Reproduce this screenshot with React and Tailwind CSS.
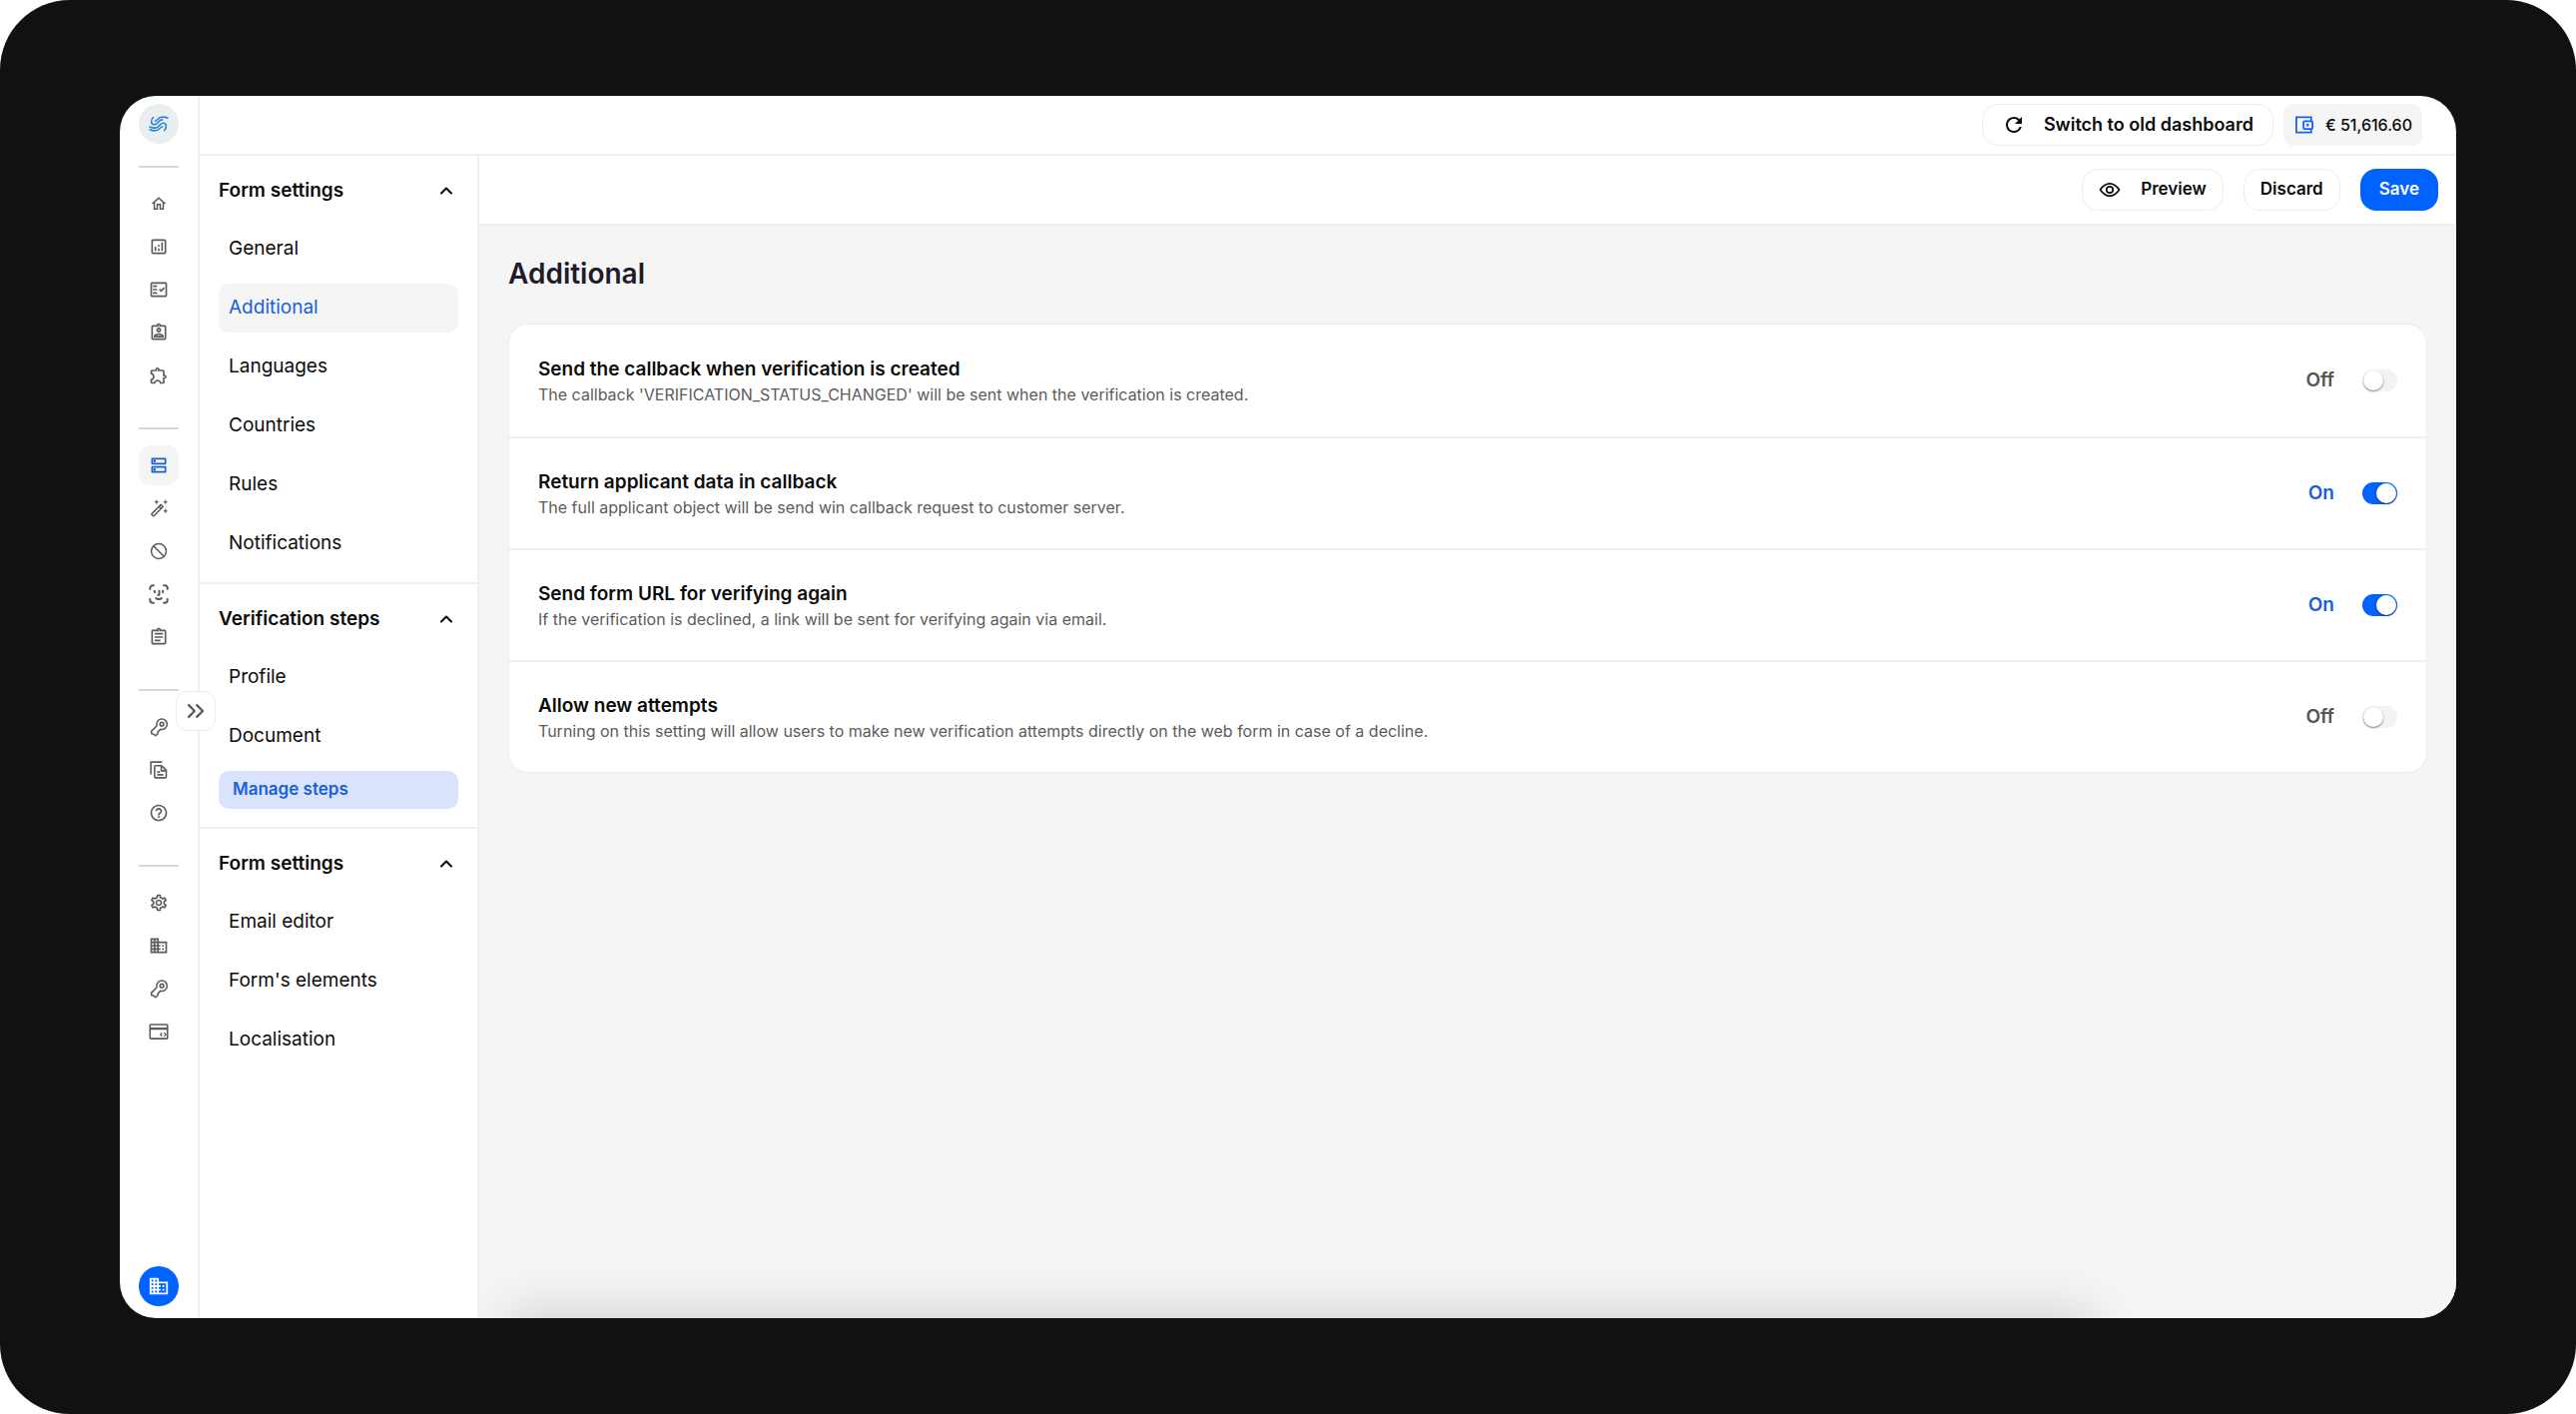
import { useState } from 'react'
import {
  MdOutlineHome, MdOutlineAnalytics, MdOutlineFactCheck, MdOutlineAssignmentInd, MdOutlineExtension,
  MdOutlineDns, MdOutlineAssignment, MdHelpOutline, MdDomain, MdRefresh, MdOutlineSettings,
} from 'react-icons/md'
import { ChevronUp, ChevronsRight, Ban } from 'lucide-react'

function LogoIcon({ className }) {
  return (
    <svg viewBox="0 0 20 16" className={className} fill="none" stroke="#2f86d6" strokeWidth="1.6" strokeLinecap="round" aria-hidden="true">
      <path d="M4.500 1.500C1.500 4.200 2 8.600 5.500 8.800C9.500 9 9 4 13.500 3.900" />
      <path d="M6.300 5.200C8.800 5 8.800 1.200 14 1.100C16 1.100 17.500 1.400 19 2.200" />
      <path d="M15.500 14.500C18.500 11.800 18 7.400 14.500 7.200C10.500 7 11 12 6.500 12.100" />
      <path d="M13.700 10.800C11.200 11 11.200 14.800 6 14.900C4 14.900 2.500 14.600 1 13.800" />
      <path d="M.9 11C2.500 11.900 4.500 12.200 6.500 12.100" />
    </svg>
  )
}

function WandIcon({ className }) {
  return (
    <svg viewBox="0 0 24 24" className={className} fill="none" stroke="currentColor" strokeWidth="2" strokeLinejoin="round" aria-hidden="true">
      <path d="M2.800 19.200 14.800 7.200 17.600 10 5.600 22a1 1 0 0 1-1.400 0l-1.400-1.400a1 1 0 0 1 0-1.400Z" />
      <path d="m12.300 9.700 2.800 2.800" />
      <path d="m9 0 1 2.500 2.500 1-2.500 1L9 7 8 4.500l-2.500-1 2.500-1ZM21 0l1 2.500 2 1-2 1L21 7l-1-2.500-2.500-1 2.500-1ZM21 12l1 2.500 2 1-2 1-1 2.500-1-2.500-2.500-1 2.500-1Z" fill="currentColor" stroke="none" />
    </svg>
  )
}

function FaceIcon({ className }) {
  return (
    <svg viewBox="0 0 24 24" className={className} fill="none" stroke="currentColor" strokeWidth="2.2" strokeLinecap="round" aria-hidden="true">
      <path d="M2.500 6.500v-1a3 3 0 0 1 3-3h1M17.500 2.500h1a3 3 0 0 1 3 3v1M21.500 17.500v1a3 3 0 0 1-3 3h-1M6.500 21.500h-1a3 3 0 0 1-3-3v-1" />
      <path d="M7.500 8.500v1.500M16.500 8.500v1.500M12.500 8.500v3.500a1 1 0 0 1-1 1h-.3M9 16.500c1.700 1.200 4.300 1.200 6 0" />
    </svg>
  )
}

function KeyIcon({ className }) {
  return (
    <svg viewBox="0 0 24 24" className={className} fill="none" stroke="currentColor" strokeWidth="1.9" strokeLinejoin="round" aria-hidden="true">
      <path d="M9.700 10.500a6.300 6.300 0 1 1 4.300 4.300l-3 3-.5 2.700-2.500 2-2.200-2-2.300-.3-.5-2.900Z" />
      <circle cx="15.700" cy="8.600" r="2.200" />
    </svg>
  )
}

function CopyIcon({ className }) {
  return (
    <svg viewBox="0 0 24 24" className={className} fill="none" stroke="currentColor" strokeWidth="1.9" strokeLinejoin="round" aria-hidden="true">
      <path d="M2.500 17.500V2.500H16" />
      <path d="M8 7h7.500l5.500 5.500V20.500a1 1 0 0 1-1 1H8a1 1 0 0 1-1-1V8a1 1 0 0 1 1-1Z" />
      <path d="M15 7.500V13h5.500M10 14.500h3.500M10 17.800h7.500" />
    </svg>
  )
}

function CardIcon({ className }) {
  return (
    <svg viewBox="0 0 24 24" className={className} fill="none" stroke="currentColor" strokeWidth="1.9" aria-hidden="true">
      <rect x="1.500" y="3.500" width="21" height="17" rx="1" />
      <path d="M1.500 8.500h21" strokeWidth="2.800" />
      <path d="m16 13.500-2 2 2 2M18.500 13.500l2 2-2 2" strokeWidth="1.5" />
    </svg>
  )
}

function WalletIcon({ className }) {
  return (
    <svg viewBox="0 0 20 20" className={className} fill="none" stroke="#1463f5" strokeWidth="2" aria-hidden="true">
      <path d="M17.500 6V1.500H1V18.500h16.500v-4" />
      <rect x="9" y="6" width="10" height="8.500" rx="1.200" />
      <circle cx="13.500" cy="10.200" r=".6" fill="#1463f5" />
    </svg>
  )
}

function EyeIcon({ className }) {
  return (
    <svg viewBox="0 0 22 16" className={className} fill="none" stroke="currentColor" strokeWidth="1.7" aria-hidden="true">
      <path d="M1.500 8C4.500 3.500 7.600 1.800 11 1.800S17.500 3.500 20.500 8c-3 4.500-6.100 6.200-9.500 6.200S4.500 12.500 1.500 8Z" strokeLinejoin="round" />
      <circle cx="11" cy="8" r="3.200" />
    </svg>
  )
}

const railGroups = [
  [
    { label: 'Home', Icon: MdOutlineHome, size: 'size-[18px]' },
    { label: 'Analytics', Icon: MdOutlineAnalytics },
    { label: 'Verifications', Icon: MdOutlineFactCheck },
    { label: 'Applicants', Icon: MdOutlineAssignmentInd },
    { label: 'Integrations', Icon: MdOutlineExtension },
  ],
  [
    { label: 'Forms', Icon: MdOutlineDns, active: true },
    { label: 'Customization', Icon: WandIcon, size: 'size-[18px]' },
    { label: 'Blocklist', Icon: Ban, size: 'size-[18px]' },
    { label: 'Face search', Icon: FaceIcon, size: 'size-[22px]' },
    { label: 'Questionnaires', Icon: MdOutlineAssignment },
  ],
  [
    { label: 'API keys', Icon: KeyIcon },
    { label: 'Documentation', Icon: CopyIcon },
    { label: 'Help', Icon: MdHelpOutline },
  ],
  [
    { label: 'Settings', Icon: MdOutlineSettings },
    { label: 'Company', Icon: MdDomain },
    { label: 'Access', Icon: KeyIcon },
    { label: 'Billing', Icon: CardIcon },
  ],
]

const sections = [
  { title: 'Form settings', items: ['General', 'Additional', 'Languages', 'Countries', 'Rules', 'Notifications'] },
  { title: 'Verification steps', items: ['Profile', 'Document'], manage: true },
  { title: 'Form settings', items: ['Email editor', "Form's elements", 'Localisation'] },
]

const initialSettings = [
  {
    id: 'created',
    title: 'Send the callback when verification is created',
    text: "The callback 'VERIFICATION_STATUS_CHANGED' will be sent when the verification is created.",
    on: false,
  },
  {
    id: 'applicant',
    title: 'Return applicant data in callback',
    text: 'The full applicant object will be send win callback request to customer server.',
    on: true,
  },
  {
    id: 'url',
    title: 'Send form URL for verifying again',
    text: 'If the verification is declined, a link will be sent for verifying again via email.',
    on: true,
  },
  {
    id: 'attempts',
    title: 'Allow new attempts',
    text: 'Turning on this setting will allow users to make new verification attempts directly on the web form in case of a decline.',
    on: false,
  },
]

function Rail() {
  return (
    <aside className="relative flex w-20 shrink-0 flex-col items-center border-r-2 border-[#f0f0f0] pt-2 pb-3">
      <a href="#" aria-label="Dashboard" className="flex size-10 items-center justify-center rounded-full bg-[#e9eef1]">
        <LogoIcon className="h-4 w-5" />
      </a>
      {railGroups.map((group, i) => (
        <nav key={i} className={`flex flex-col items-center ${i === 0 ? 'mt-[22px]' : 'mt-8'}`}>
          <hr className="mb-4 w-10 border-t-2 border-[#d8d8d8]" />
          <div className="flex flex-col gap-[3px]">
            {group.map(({ label, Icon, size, active }) => (
              <a
                key={label}
                href="#"
                aria-label={label}
                className={`flex size-10 items-center justify-center rounded-xl ${active ? 'bg-[#f5f5f5] text-[#1a5fd8]' : 'text-[#5c5c5c]'}`}
              >
                <Icon className={size || 'size-5'} />
              </a>
            ))}
          </div>
        </nav>
      ))}
      <button aria-label="Account" className="mt-auto flex size-10 items-center justify-center rounded-full bg-[#0062ff] text-white">
        <MdDomain className="size-[22px]" />
      </button>
      <button
        aria-label="Expand menu"
        className="absolute top-[596px] -right-[18px] z-10 flex size-10 items-center justify-center rounded-xl border border-[#ececec] bg-white text-[#5c5c5c]"
      >
        <ChevronsRight className="size-7" />
      </button>
    </aside>
  )
}

function SidePanel({ current, onSelect }) {
  return (
    <div className="w-[280px] shrink-0 border-r-2 border-[#f0f0f0]">
      {sections.map((section, i) => (
        <section
          key={i}
          className={`px-[19px] pt-[11px] ${section.manage ? 'pb-[18px]' : 'pb-3.5'} ${i > 0 ? 'border-t-2 border-[#f0f0f0]' : ''}`}
        >
          <button className="flex h-12 w-full items-center justify-between pr-0.5 text-[19px] font-semibold">
            {section.title}
            <ChevronUp className="size-5" strokeWidth={2.5} />
          </button>
          <ul className="mt-2.5 flex flex-col gap-2.5">
            {section.items.map((item) => (
              <li key={item}>
                <a
                  href="#"
                  onClick={() => onSelect(item)}
                  className={`flex h-[49px] items-center rounded-[10px] px-2.5 text-[19px] ${item === current ? 'bg-[#f5f5f5] text-[#1a5fd8]' : ''}`}
                >
                  {item}
                </a>
              </li>
            ))}
          </ul>
          {section.manage && (
            <button className="mt-2.5 block h-[38px] w-full rounded-[10px] bg-[#d9e4fc] px-3.5 text-left text-[17px] font-semibold text-[#1a5fd8]">
              Manage steps
            </button>
          )}
        </section>
      ))}
    </div>
  )
}

function SettingRow({ setting, onToggle }) {
  return (
    <div className="flex h-28 items-center justify-between border-t-2 border-[#f0f0f0] px-[29px] first:border-t-0">
      <div>
        <h2 className="text-[19px] leading-7 font-semibold">{setting.title}</h2>
        <p className="text-base leading-[22px] text-[#5c5c5c]">{setting.text}</p>
      </div>
      <label className="flex items-center gap-7 text-[19px] font-semibold">
        <span className={setting.on ? 'text-[#1a5fd8]' : 'text-[#555]'}>{setting.on ? 'On' : 'Off'}</span>
        <span className="relative">
          <input type="checkbox" role="switch" aria-label={setting.title} checked={setting.on} onChange={onToggle} className="peer sr-only" />
          <span className="flex h-[22px] w-[35px] items-center rounded-full bg-[#f3f3f3] p-px peer-checked:justify-end peer-checked:bg-[#0062ff]">
            <span className="size-5 rounded-full bg-white shadow-[0_1px_2px_rgba(0,0,0,0.5)]" />
          </span>
        </span>
      </label>
    </div>
  )
}

export default function App() {
  const [current, setCurrent] = useState('Additional')
  const [settings, setSettings] = useState(initialSettings)

  const toggle = (id) => setSettings(settings.map((s) => (s.id === id ? { ...s, on: !s.on } : s)))

  return (
    <div className="min-h-screen bg-white">
      <div className="flex min-h-screen rounded-[70px] bg-[#111] px-[120px] py-24 font-[Inter,sans-serif] text-[#0c0c0c]">
        <div className="flex flex-1 overflow-hidden rounded-[36px] bg-white">
          <Rail />

          <div className="flex flex-1 flex-col">
            <header className="flex h-15 items-center justify-end gap-2.5 border-b-2 border-[#f0f0f0] pr-[34px]">
              <button className="flex h-[42px] items-center gap-[18px] rounded-2xl border border-[#ececec] px-[19px] text-lg font-semibold">
                <MdRefresh className="size-6" />
                Switch to old dashboard
              </button>
              <div className="flex h-[42px] items-center gap-3 rounded-[10px] bg-[#f5f5f5] pr-2.5 pl-3 text-base font-medium">
                <WalletIcon className="size-[18px]" />
                € 51,616.60
              </div>
            </header>

            <div className="flex flex-1">
              <SidePanel current={current} onSelect={setCurrent} />

              <main className="relative flex-1 overflow-hidden bg-[#f5f5f5]">
                <div className="flex h-[70px] items-center justify-end gap-5 border-b-2 border-[#f0f0f0] bg-white pr-[18px] text-[17px] font-semibold">
                  <button className="flex h-[42px] items-center gap-5 rounded-2xl border border-[#ececec] px-4">
                    <EyeIcon className="h-4 w-[22px]" />
                    Preview
                  </button>
                  <button className="h-[42px] rounded-2xl border border-[#ececec] px-4">Discard</button>
                  <button className="h-[42px] rounded-2xl bg-[#0062ff] px-[19px] text-white">Save</button>
                </div>

                <div className="px-[29px] pt-7">
                  <h1 className="text-[28px] leading-10 font-semibold text-[#1d1b2c]">Additional</h1>
                  <div className="mt-[30px] rounded-[20px] border border-[#ececec] bg-white">
                    {settings.map((setting) => (
                      <SettingRow key={setting.id} setting={setting} onToggle={() => toggle(setting.id)} />
                    ))}
                  </div>
                </div>

                {/* floating bar shadow rising from the bottom edge */}
                <div className="absolute top-full right-[365px] left-7 h-10 shadow-[0_0_56px_rgba(0,0,0,0.2)]" />
              </main>
            </div>
          </div>
        </div>
      </div>
    </div>
  )
}
